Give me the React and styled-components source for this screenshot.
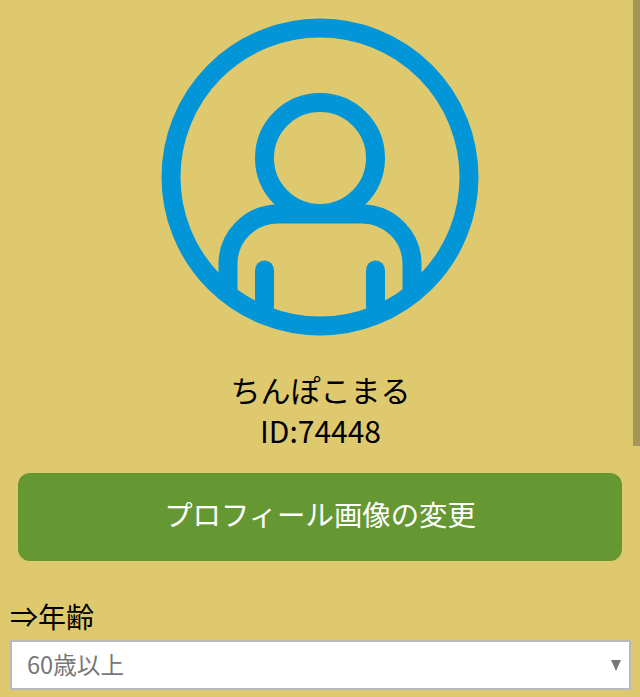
import React from 'react'
import styled, { createGlobalStyle } from 'styled-components'

const GlobalStyle = createGlobalStyle`
  html, body {
    margin: 0;
    height: 697px;
    overflow: hidden;
    background: #dec96e;
  }
  * {
    box-sizing: border-box;
  }
`

const Page = styled.div`
  position: relative;
  height: 697px;
  overflow: hidden;
  padding: 18px 9px 0 10px;
  background: #dec96e;
  color: #000;
  font-family: "Noto Sans CJK JP", "Noto Sans", sans-serif;
`

const Scrollbar = styled.div`
  position: absolute;
  top: 0;
  right: 0;
  width: 7px;
  height: 446px;
  background: #a39658;
`

const Profile = styled.section`
  display: flex;
  flex-direction: column;
  align-items: center;
`

const Avatar = styled.svg`
  display: block;
  width: 320px;
  height: 320px;
  margin-left: -1px;
`

const Name = styled.div`
  margin-top: 31px;
  font-size: 30px;
  line-height: 40px;
`

const UserId = styled.div`
  font-size: 30px;
  line-height: 43px;
  margin-bottom: 21px;
`

const ChangeButton = styled.button`
  display: block;
  width: 604px;
  height: 88px;
  margin: 0 0 0 8px;
  padding: 0 0 7px;
  border: 0;
  border-radius: 12px;
  background: #659833;
  color: #fff;
  font-family: inherit;
  font-size: 28.4px;
`

const FieldLabel = styled.label`
  display: block;
  margin-top: 34px;
  font-size: 28px;
  line-height: 42px;
`

const SelectWrap = styled.div`
  position: relative;
  width: 621px;
  height: 50px;
  margin-top: 3px;
`

const Select = styled.select`
  display: block;
  width: 100%;
  height: 100%;
  padding: 0 15px 3px;
  border: 2px solid #b9b9b9;
  border-radius: 0;
  appearance: none;
  background: #fff;
  color: #777;
  font-family: inherit;
  font-size: 23.6px;
`

const Caret = styled.span`
  position: absolute;
  top: 20px;
  right: 10px;
  width: 0;
  height: 0;
  border-left: 5px solid transparent;
  border-right: 5px solid transparent;
  border-top: 11px solid #777;
`

export default function App() {
  return (
    <Page>
      <GlobalStyle />
      <Scrollbar />
      <Profile>
        <Avatar viewBox="0 0 320 320" fill="none" stroke="#0295d8" strokeWidth="19" strokeLinecap="round">
          <circle cx="160" cy="159" r="149" />
          <circle cx="160" cy="140" r="55.500" />
          <path d="M68 278V246a50 50 0 0 1 50-50h84a50 50 0 0 1 50 50v32" strokeLinecap="butt" />
          <path d="M104.500 252V288" />
          <path d="M215.500 252V288" />
        </Avatar>
        <Name>ちんぽこまる</Name>
        <UserId>ID:74448</UserId>
      </Profile>
      <ChangeButton type="button">プロフィール画像の変更</ChangeButton>
      <FieldLabel htmlFor="age">⇒年齢</FieldLabel>
      <SelectWrap>
        <Select id="age" defaultValue="60">
          <option value="60">60歳以上</option>
        </Select>
        <Caret />
      </SelectWrap>
    </Page>
  )
}
